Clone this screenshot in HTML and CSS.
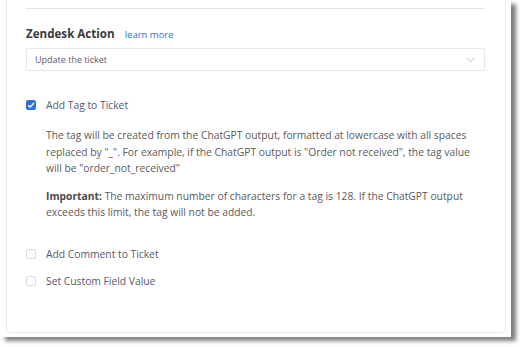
FILE: index.html
```html
<!DOCTYPE html>
<html>
<head>
<meta charset="utf-8">
<link rel="stylesheet" href="styles.css">
</head>
<body>
<div class="frame">
  <div class="card">
    <div class="sep"></div>
    <div class="head">
      <span class="title">Zendesk Action</span>
      <a class="learn">learn more</a>
    </div>
    <div class="select">
      <span>Update the ticket</span>
      <svg class="chev" width="9" height="6" viewBox="0 0 9 6"><path d="M0.5 0.8 L4.5 4.8 L8.5 0.8" fill="none" stroke="#b8bcc4" stroke-width="1"/></svg>
    </div>
    <div class="opt checked-opt">
      <span class="box checked"><svg width="10" height="10" viewBox="0 0 10 10"><path d="M2.2 5.2 L4.2 7.1 L7.9 3" fill="none" stroke="#fff" stroke-width="1.4"/></svg></span>
      <span class="label">Add Tag to Ticket</span>
    </div>
    <div class="desc">
      <p>The tag will be created from the ChatGPT output, formatted at lowercase with all spaces replaced by "_". For example, if the ChatGPT output is "Order not received", the tag value will be "order_not_received"</p>
      <p><b>Important:</b> The maximum number of characters for a tag is 128. If the ChatGPT output exceeds this limit, the tag will not be added.</p>
    </div>
    <div class="opt">
      <span class="box"></span>
      <span class="label">Add Comment to Ticket</span>
    </div>
    <div class="opt">
      <span class="box"></span>
      <span class="label">Set Custom Field Value</span>
    </div>
  </div>
</div>
</body>
</html>
```
FILE: styles.css
```css
html, body {
  margin: 0;
  padding: 0;
  background: #fff;
}
body {
  width: 520px;
  height: 347px;
  overflow: hidden;
  font-family: "Open Sans", "Noto Sans", sans-serif;
}
.frame {
  width: 511px;
  height: 337px;
  background: #fff;
  box-shadow: 5px 4px 4px rgba(0, 0, 0, 0.5);
  padding-left: 6px;
  box-sizing: border-box;
}
.card {
  width: 500px;
  height: 333px;
  box-sizing: border-box;
  border: 1px solid #e7ebef;
  border-top: none;
  border-radius: 0 0 5px 5px;
  padding: 8px 20px 0 19px;
}
.sep {
  height: 1px;
  background: #e3e5e8;
}
.head {
  display: flex;
  align-items: baseline;
  gap: 10px;
  margin-top: 17px;
  height: 18px;
}
.title {
  font-size: 11.6px;
  font-weight: 700;
  color: #3a3a3a;
}
.learn {
  font-size: 9.5px;
  color: #2f6fd6;
}
.select {
  margin-top: 4px;
  height: 21px;
  border: 1px solid #e3e6ea;
  border-radius: 2px;
  display: flex;
  align-items: center;
  justify-content: space-between;
  padding: 0 9px 0 8px;
  font-size: 9px;
  color: #5c5c70;
}
.opt {
  display: flex;
  align-items: center;
  gap: 10px;
  height: 14px;
  margin-bottom: 13px;
}
.checked-opt {
  margin-top: 27px;
  margin-bottom: 15px;
}
.box {
  width: 10px;
  height: 10px;
  border: 1px solid #d9dce1;
  border-radius: 2px;
  box-sizing: border-box;
  display: flex;
  background: #fff;
}
.box.checked {
  background: #2f72d8;
  border-color: #2f72d8;
}
.box.checked svg {
  margin: -1px;
}
.label {
  font-size: 10.3px;
  color: #585870;
}
.desc {
  padding-left: 20px;
  padding-bottom: 15px;
  font-size: 10.3px;
  line-height: 16.5px;
  color: #5a5a5c;
}
.desc p {
  margin: 0 0 11px 0;
}
.desc b {
  font-weight: 700;
  color: #4a4a4c;
}
```
